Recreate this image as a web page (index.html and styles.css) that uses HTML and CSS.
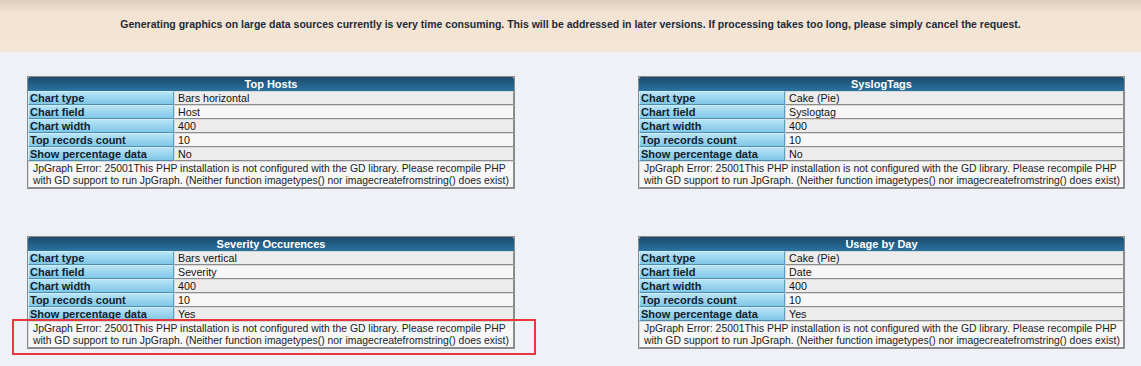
FILE: index.html
```html
<!DOCTYPE html>
<html lang="en">
<head>
    <meta charset="UTF-8">
    <title>Charts</title>
    <link rel="stylesheet" href="styles.css">
</head>
<body>

<!-- Notice banner -->
<div class="notice">
    Generating graphics on large data sources currently is very time consuming. This will be addressed in later versions. If processing takes too long, please simply cancel the request.
</div>

<div class="charts">

    <!-- Top Hosts -->
    <table class="chart">
        <tr><th colspan="2">Top Hosts</th></tr>
        <tr><td class="label">Chart type</td><td class="value odd">Bars horizontal</td></tr>
        <tr><td class="label">Chart field</td><td class="value">Host</td></tr>
        <tr><td class="label">Chart width</td><td class="value odd">400</td></tr>
        <tr><td class="label">Top records count</td><td class="value">10</td></tr>
        <tr><td class="label">Show percentage data</td><td class="value odd">No</td></tr>
        <tr><td class="error" colspan="2">JpGraph Error: 25001This PHP installation is not configured with the GD library. Please recompile PHP with GD support to run JpGraph. (Neither function imagetypes() nor imagecreatefromstring() does exist)</td></tr>
    </table>

    <!-- SyslogTags -->
    <table class="chart">
        <tr><th colspan="2">SyslogTags</th></tr>
        <tr><td class="label">Chart type</td><td class="value odd">Cake (Pie)</td></tr>
        <tr><td class="label">Chart field</td><td class="value">Syslogtag</td></tr>
        <tr><td class="label">Chart width</td><td class="value odd">400</td></tr>
        <tr><td class="label">Top records count</td><td class="value">10</td></tr>
        <tr><td class="label">Show percentage data</td><td class="value odd">No</td></tr>
        <tr><td class="error" colspan="2">JpGraph Error: 25001This PHP installation is not configured with the GD library. Please recompile PHP with GD support to run JpGraph. (Neither function imagetypes() nor imagecreatefromstring() does exist)</td></tr>
    </table>

    <!-- Severity Occurences -->
    <div class="marked">
        <table class="chart">
            <tr><th colspan="2">Severity Occurences</th></tr>
            <tr><td class="label">Chart type</td><td class="value odd">Bars vertical</td></tr>
            <tr><td class="label">Chart field</td><td class="value">Severity</td></tr>
            <tr><td class="label">Chart width</td><td class="value odd">400</td></tr>
            <tr><td class="label">Top records count</td><td class="value">10</td></tr>
            <tr><td class="label">Show percentage data</td><td class="value odd">Yes</td></tr>
            <tr><td class="error" colspan="2">JpGraph Error: 25001This PHP installation is not configured with the GD library. Please recompile PHP with GD support to run JpGraph. (Neither function imagetypes() nor imagecreatefromstring() does exist)</td></tr>
        </table>
        <div class="highlight"></div>
    </div>

    <!-- Usage by Day -->
    <table class="chart">
        <tr><th colspan="2">Usage by Day</th></tr>
        <tr><td class="label">Chart type</td><td class="value odd">Cake (Pie)</td></tr>
        <tr><td class="label">Chart field</td><td class="value">Date</td></tr>
        <tr><td class="label">Chart width</td><td class="value odd">400</td></tr>
        <tr><td class="label">Top records count</td><td class="value">10</td></tr>
        <tr><td class="label">Show percentage data</td><td class="value odd">Yes</td></tr>
        <tr><td class="error" colspan="2">JpGraph Error: 25001This PHP installation is not configured with the GD library. Please recompile PHP with GD support to run JpGraph. (Neither function imagetypes() nor imagecreatefromstring() does exist)</td></tr>
    </table>

</div>

</body>
</html>
```

FILE: styles.css
```css
body {
    margin: 0;
    background-color: #eef1f6;
    font-family: "Liberation Sans", Arial, sans-serif;
    color: #111;
}
.notice {
    height: 52px;
    box-sizing: border-box;
    padding-top: 18px;
    text-align: center;
    font-size: 10.5px;
    font-weight: bold;
    color: #1e2a38;
    background: linear-gradient(#dccdbd 0, #f3e3d2 12px, #f5e6d6 100%);
}
.charts {
    display: grid;
    grid-template-columns: 488px 487px;
    column-gap: 123px;
    row-gap: 47px;
    padding: 24px 0 20px 27px;
}
.marked {
    position: relative;
}
.highlight {
    position: absolute;
    left: -15px;
    top: 83px;
    width: 520px;
    height: 32px;
    border: 2px solid #e8383d;
}
table.chart {
    width: 100%;
    border-collapse: separate;
    border-spacing: 0;
    border: 1px solid #8a8a8a;
    font-size: 10.7px;
}
.chart th {
    height: 14px;
    padding: 0;
    color: white;
    font-weight: bold;
    font-size: 11px;
    background: linear-gradient(#1b4b6c, #2a72a0);
    border-radius: 2px 2px 0 0;
}
.chart td {
    height: 12px;
    padding: 0 2px;
    line-height: 12px;
    border: 1px solid;
    border-color: #d8d8d8 #8c8c8c #8c8c8c #d8d8d8;
}
.chart .label {
    width: 141px;
    padding-left: 1px;
    font-size: 11px;
    font-weight: bold;
    color: #14222e;
    background: linear-gradient(#b6e3f6, #80c7e6);
    border-color: #cfeefa #5d9fbf #4d8db0 #cfeefa;
}
.chart .value {
    padding-left: 3px;
    background-color: #f7f7f7;
}
.chart .value.odd {
    background-color: #ececec;
}
.chart .error {
    height: auto;
    padding: 1px 0 0 4px;
    line-height: 12px;
    font-size: 10.4px;
    color: #222;
    background-color: #f7f7f7;
}
```
